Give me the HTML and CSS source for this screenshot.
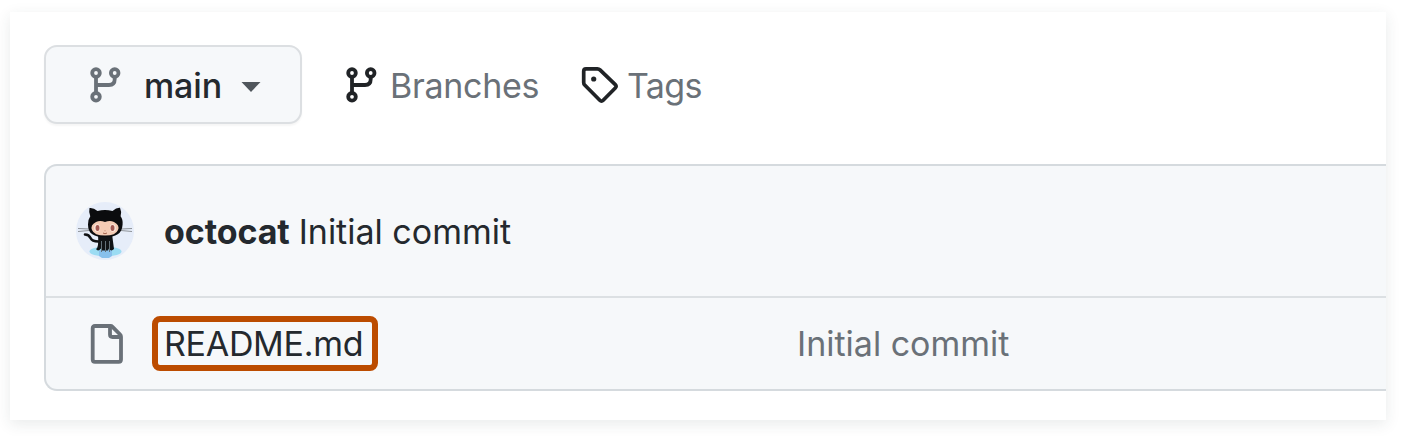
FILE: index.html
```html
<!DOCTYPE html>
<html lang="en">
<head>
<meta charset="utf-8">
<title>Repository files</title>
<link rel="stylesheet" href="styles.css">
</head>
<body>
<main class="card">
  <nav class="toolbar">
    <button class="branch-button">
      <svg class="branch-icon" viewBox="0 0 32 36"><g fill="none" stroke="currentColor" stroke-width="3.8"><circle cx="6" cy="6" r="3.8"/><circle cx="24.7" cy="6" r="3.8"/><circle cx="6" cy="29.8" r="3.8"/><path d="M6 9.8V26M6 18h13q5.7 0 5.7-5.7V9.8"/></g></svg>
      <span class="branch-name">main</span>
      <svg class="caret" viewBox="0 0 20 10"><path d="M.5 0h19L10 10z" fill="currentColor"/></svg>
    </button>
    <a class="nav-link branches">
      <svg class="branch-icon" viewBox="0 0 32 36"><g fill="none" stroke="currentColor" stroke-width="3.8"><circle cx="6" cy="6" r="3.8"/><circle cx="24.7" cy="6" r="3.8"/><circle cx="6" cy="29.8" r="3.8"/><path d="M6 9.8V26M6 18h13q5.7 0 5.7-5.7V9.8"/></g></svg>
      <span>Branches</span>
    </a>
    <a class="nav-link tags">
      <svg class="tag-icon" viewBox="0 0 38 38"><path d="M5 2.8h11.4q1.500 0 2.600 1.100l15.300 14.800q1.700 1.600 0 3.300L22.200 34.200q-1.700 1.700-3.400 0L3.700 19q-1-1-1-2.500V5.200q0-2.400 2.300-2.400z" fill="none" stroke="currentColor" stroke-width="3.700" stroke-linejoin="round"/><circle cx="12.700" cy="13" r="2.600" fill="currentColor"/></svg>
      <span>Tags</span>
    </a>
  </nav>
  <section class="files">
    <header class="commit-row">
      <svg class="avatar" viewBox="0 0 58 58">
        <circle cx="29" cy="29" r="29" fill="#e6edf9"/>
        <ellipse cx="29.500" cy="49.500" rx="16" ry="5" fill="#9bdcf3"/>
        <path d="M23 48h13v6l-3 2h-7l-3-2z" fill="#88c0ec"/>
        <path d="M2 26.500l11 .5M2 29.500l11-1M56 26.500l-11 .5M56 29.500l-11-1" stroke="#85898d" fill="none" stroke-width=".9"/>
        <path d="M9 32.500q4 0 5.500 3.500t8 3.500" fill="none" stroke="#101113" stroke-width="2.600" stroke-linecap="round"/>
        <path d="M22 32h14l2 15q-3 3-5-.5l-1 2h-6l-1-2q-3 3.500-5 .5 3-1 2-15z" fill="#111315"/>
        <path d="M13.500 6q4-.5 8 3 7.500-2 15 0 4-3.500 7.500-3.200 2 4.200.6 8.500 2.400 3 2 8.200C46 32 40 35 29 35S12 32 12 22.500q0-5 2.300-8.200-1.800-4-.8-8.300z" fill="#0b0c0e"/>
        <path d="M20 20q4-2 9 0 5-2 9 0 6 3 4 8-2 5.500-13 5.500T16 28q-2-5 4-8z" fill="#f4cbb4"/>
        <ellipse cx="21.200" cy="26" rx="3" ry="3.800" fill="#fbe9df"/><ellipse cx="36.800" cy="26" rx="3" ry="3.800" fill="#fbe9df"/>
        <ellipse cx="21.500" cy="26" rx="2" ry="3" fill="#a25851"/><ellipse cx="36.500" cy="26" rx="2" ry="3" fill="#a25851"/>
        <path d="M27 31q2 1.500 4 0M29 28.500v.7" stroke="#a5644e" fill="none"/>
        <path d="M25.500 39v11M29.500 39v11M33.500 39v11" stroke="#647078" stroke-width="1"/>
      </svg>
      <p class="commit-text"><strong>octocat</strong><span>Initial commit</span></p>
    </header>
    <div class="file-row">
      <svg class="file-icon" viewBox="0 0 34 42"><g fill="none" stroke="currentColor" stroke-width="3.800" stroke-linejoin="round"><path d="M5 3h15.500q1.200 0 2 .8l7.600 7.700q.9.900.9 2.200V36.500q0 2.300-2.300 2.300H5q-2.300 0-2.300-2.300V5.300Q2.700 3 5 3z"/><path d="M20 3v8.500q0 2.500 2.500 2.500H31"/></g></svg>
      <a class="file-name"><span>README.md</span></a>
      <span class="message">Initial commit</span>
    </div>
  </section>
</main>
</body>
</html>
```

FILE: styles.css
```css
* { box-sizing: border-box; }
body {
  margin: 0;
  padding: 12px 20px 16px 10px;
  height: 436px;
  overflow: hidden;
  background: #fff;
  color: #24292e;
  font: 400 34px/40px Inter, "Liberation Sans", sans-serif;
}
.card {
  height: 408px;
  padding: 33px 0 30px 34px;
  overflow: hidden;
  background: #fff;
  box-shadow: 0 4px 14px rgba(40, 60, 60, .1);
}
svg { display: block; flex: none; }
.toolbar { display: flex; align-items: center; height: 79px; }
.toolbar span { padding-top: 2px; }
.branch-button {
  display: flex;
  align-items: center;
  width: 258px;
  height: 79px;
  padding: 0 0 0 44px;
  border: 2px solid #dcdfe2;
  border-radius: 13px;
  background: #f6f8fa;
  box-shadow: 0 2px 2px rgba(27, 31, 35, .04);
  color: #24292e;
  font: 500 34px/40px Inter, sans-serif;
}
.branch-icon { width: 32px; height: 36px; }
.branch-button .branch-icon { color: #6a7178; }
.branch-name { flex: none; width: 119px; padding-left: 22px; text-align: left; letter-spacing: -.1px; }
.caret { width: 20px; height: 10px; margin-top: 5px; color: #50565c; }
.nav-link { display: flex; align-items: center; color: #6a7178; }
.nav-link svg { color: #202326; }
.branches { width: 235px; margin-left: 44px; gap: 12px; letter-spacing: -.3px; }
.tags { gap: 8px; letter-spacing: -.6px; }
.tag-icon { width: 38px; height: 38px; }
.files {
  height: 227px;
  margin: 40px 0 0 0;
  border: 2px solid #d5dade;
  border-right: 0;
  border-radius: 13px 0 0 13px;
  background: #f6f8fa;
}
.commit-row {
  display: flex;
  align-items: center;
  height: 132px;
  padding-left: 30px;
  border-bottom: 2px solid #dce0e3;
}
.avatar { width: 58px; height: 58px; }
.commit-text { display: flex; gap: 9px; margin: 0 0 0 30px; padding-top: 2px; letter-spacing: 0; }
.commit-text strong { font-weight: 650; letter-spacing: -.1px; }
.file-row { display: flex; align-items: center; height: 91px; }
.file-icon { width: 34px; height: 42px; margin-left: 44px; color: #6a7178; }
.file-name {
  display: flex;
  align-items: center;
  width: 226px;
  height: 55px;
  margin-left: 28px;
  padding-left: 6px;
  border: 6px solid #bc4c00;
  border-radius: 8px;
  letter-spacing: -.3px;
}
.message { margin-left: 419px; color: #6a7178; letter-spacing: 0; }
```
